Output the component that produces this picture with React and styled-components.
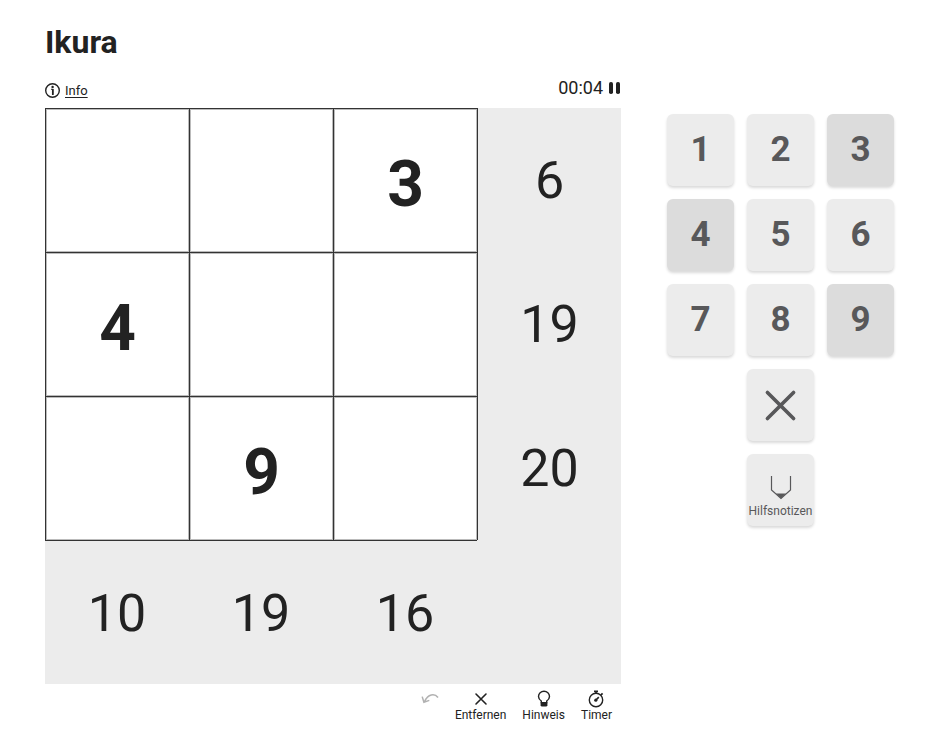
import { useState } from "react";
import styled, { createGlobalStyle } from "styled-components";

const GlobalStyle = createGlobalStyle`
  *, *::before, *::after {
    box-sizing: border-box;
  }

  body {
    margin: 0;
    background: #fff;
    color: #222;
    font-family: Roboto, sans-serif;
  }

  button {
    padding: 0;
    border: 0;
    font-family: inherit;
    cursor: pointer;
  }

  svg {
    display: block;
    flex: none;
  }
`;

const Page = styled.main`
  padding: 20px 38px 28px 45px;
`;

const Title = styled.h1`
  margin: 0;
  font-size: 32px;
  line-height: 44px;
`;

const Game = styled.div`
  display: flex;
  align-items: flex-start;
  gap: 46px;
  margin-top: 12px;
`;

const BoardColumn = styled.section`
  flex: 1;
  min-width: 0;
`;

const StatusBar = styled.div`
  display: flex;
  align-items: center;
  justify-content: space-between;
  height: 32px;
`;

const InfoLink = styled.a`
  display: flex;
  align-items: center;
  gap: 5px;
  padding-bottom: 3px;
  color: inherit;
  font-size: 13px;
  line-height: 16px;
  text-underline-offset: 2px;
`;

const Clock = styled.div`
  display: flex;
  align-items: center;
  gap: 5px;
  padding-bottom: 8px;
  font-size: 18px;
  line-height: 24px;
`;

const PauseButton = styled.button`
  background: none;
  color: inherit;
`;

const Board = styled.table`
  width: 100%;
  aspect-ratio: 1;
  table-layout: fixed;
  border-spacing: 0;
  background: #ececec;
`;

const Cell = styled.td`
  height: 25%;
  padding: 8px 0 0;
  border: solid #333;
  border-width: 1px 0 0 1px;
  box-shadow: inset 0 0 0 1px #bbb;
  background: #fff;
  font-size: 64px;
  font-weight: 700;
  line-height: 72px;
  text-align: center;
`;

const Sum = styled.td`
  height: 25%;
  padding: 2px 0 0;
  border: solid #333;
  border-width: ${({ $side }) =>
    `${$side === "bottom" ? 1 : 0}px 0 0 ${$side === "right" ? 1 : 0}px`};
  font-size: 52px;
  line-height: 60px;
  text-align: center;
`;

const Tools = styled.div`
  display: flex;
  justify-content: flex-end;
  gap: 16px;
  padding: 6px 9px 0 0;
`;

const ToolButton = styled.button`
  display: flex;
  flex-direction: column;
  align-items: center;
  background: none;
  color: inherit;
  font-size: 12px;
  line-height: 14px;

  &:disabled {
    opacity: 0.35;
    cursor: default;
  }
`;

const Keypad = styled.div`
  display: grid;
  grid-template-columns: repeat(3, 67px);
  grid-auto-rows: 72px;
  gap: 13px;
  margin-top: 38px;
`;

const Key = styled.button`
  display: flex;
  flex-direction: column;
  align-items: center;
  justify-content: ${({ $labelled }) => ($labelled ? "flex-end" : "center")};
  grid-column: ${({ $center }) => ($center ? 2 : "auto")};
  padding-bottom: ${({ $labelled }) => ($labelled ? 8 : 0)}px;
  border-radius: 6px;
  background: ${({ $used }) => ($used ? "#dcdcdc" : "#ececec")};
  box-shadow: 0 2px 3px rgba(0, 0, 0, 0.15);
  color: #58585a;
  font-size: 35px;
  font-weight: 700;
  line-height: 40px;
`;

const KeyLabel = styled.span`
  font-size: 12px;
  font-weight: 400;
  line-height: 14px;
`;

const givens = [
  ["", "", "3"],
  ["4", "", ""],
  ["", "9", ""],
];
const rowSums = [6, 19, 20];
const columnSums = [10, 19, 16];
const digits = [1, 2, 3, 4, 5, 6, 7, 8, 9];

function InfoIcon() {
  return (
    <svg width='15' height='15' viewBox='0 0 15 15' fill='none' stroke='currentColor' aria-hidden='true'>
      <circle cx='7.5' cy='7.5' r='6.8' strokeWidth='1.4' />
      <path d='M6 6.2h1.8v5.4' strokeWidth='1.1' />
      <path d='M7.8 6v6' strokeWidth='1.7' />
      <circle cx='7.6' cy='3.9' r='1.2' fill='currentColor' stroke='none' />
    </svg>
  );
}

function PauseIcon() {
  return (
    <svg width='13' height='14' viewBox='0 0 13 14' fill='currentColor' aria-hidden='true'>
      <rect x='1' y='1' width='4' height='12' rx='1.8' />
      <rect x='8' y='1' width='4' height='12' rx='1.8' />
    </svg>
  );
}

function UndoIcon() {
  return (
    <svg width='18' height='18' viewBox='0 0 18 18' fill='none' stroke='currentColor' strokeWidth='1.5' aria-hidden='true'>
      <path d='M17 7.5C13.5 3 7 4 3.6 11.5M1.2 6.6l1.7 5.6 5.4-1.8' />
    </svg>
  );
}

function CrossIcon({ size, strokeWidth }) {
  return (
    <svg width={size} height={size} viewBox='0 0 18 18' fill='none' stroke='currentColor' strokeWidth={strokeWidth} strokeLinecap='round' aria-hidden='true'>
      <path d='M4 4l10 10M14 4L4 14' />
    </svg>
  );
}

function BulbIcon() {
  return (
    <svg width='18' height='18' viewBox='0 0 18 18' fill='none' stroke='currentColor' strokeWidth='1.4' aria-hidden='true'>
      <path d='M6.3 12.6V11C4.6 9.8 3.5 8.3 3.5 6.5a5.5 5.2 0 0 1 11 0c0 1.8-1.1 3.3-2.8 4.5v1.6z' />
      <path d='M5.6 12.2h6.8v3.4l-.9.9H6.5l-.9-.9z' fill='currentColor' stroke='none' />
    </svg>
  );
}

function TimerIcon() {
  return (
    <svg width='18' height='18' viewBox='0 0 18 18' fill='none' stroke='currentColor' strokeWidth='1.4' aria-hidden='true'>
      <circle cx='9' cy='10' r='6.7' />
      <path d='M7 1.4h4M9 1.4v2M13.8 5.2l1.8-1.8M9 10l2.8-2.8' strokeWidth='1.7' />
      <circle cx='8.8' cy='10.2' r='1.6' fill='currentColor' stroke='none' />
    </svg>
  );
}

function PencilIcon() {
  return (
    <svg width='22' height='28' viewBox='0 0 22 28' fill='none' stroke='currentColor' strokeWidth='1.2' aria-hidden='true'>
      <path d='M1.5 0v14l9.5 8.4 9.5-8.4V0' />
      <path d='M6 17.6h10l-5 5z' fill='currentColor' stroke='none' />
    </svg>
  );
}

function App() {
  const [paused, setPaused] = useState(false);
  const [notes, setNotes] = useState(false);

  return (
    <>
      <GlobalStyle />
      <Page>
        <Title>Ikura</Title>
        <Game>
          <BoardColumn>
            <StatusBar>
              <InfoLink href='#info'>
                <InfoIcon />
                Info
              </InfoLink>
              <Clock>
                00:04
                <PauseButton
                  aria-label='Pause'
                  aria-pressed={paused}
                  onClick={() => setPaused(!paused)}
                >
                  <PauseIcon />
                </PauseButton>
              </Clock>
            </StatusBar>
            <Board>
              <tbody>
                {givens.map((row, y) => (
                  <tr key={y}>
                    {row.map((value, x) => (
                      <Cell key={x}>{value}</Cell>
                    ))}
                    <Sum $side='right'>{rowSums[y]}</Sum>
                  </tr>
                ))}
                <tr>
                  {columnSums.map((sum, x) => (
                    <Sum key={x} $side='bottom'>
                      {sum}
                    </Sum>
                  ))}
                  <Sum />
                </tr>
              </tbody>
            </Board>
            <Tools>
              <ToolButton disabled aria-label='Undo'>
                <UndoIcon />
              </ToolButton>
              <ToolButton>
                <CrossIcon size={18} strokeWidth={1.6} />
                Entfernen
              </ToolButton>
              <ToolButton>
                <BulbIcon />
                Hinweis
              </ToolButton>
              <ToolButton>
                <TimerIcon />
                Timer
              </ToolButton>
            </Tools>
          </BoardColumn>
          <Keypad>
            {digits.map((digit) => (
              <Key key={digit} $used={[3, 4, 9].includes(digit)}>
                {digit}
              </Key>
            ))}
            <Key $center aria-label='Entfernen'>
              <CrossIcon size={47} strokeWidth={1.4} />
            </Key>
            <Key
              $center
              $labelled
              aria-pressed={notes}
              onClick={() => setNotes(!notes)}
            >
              <PencilIcon />
              <KeyLabel>Hilfsnotizen</KeyLabel>
            </Key>
          </Keypad>
        </Game>
      </Page>
    </>
  );
}

export default App;
